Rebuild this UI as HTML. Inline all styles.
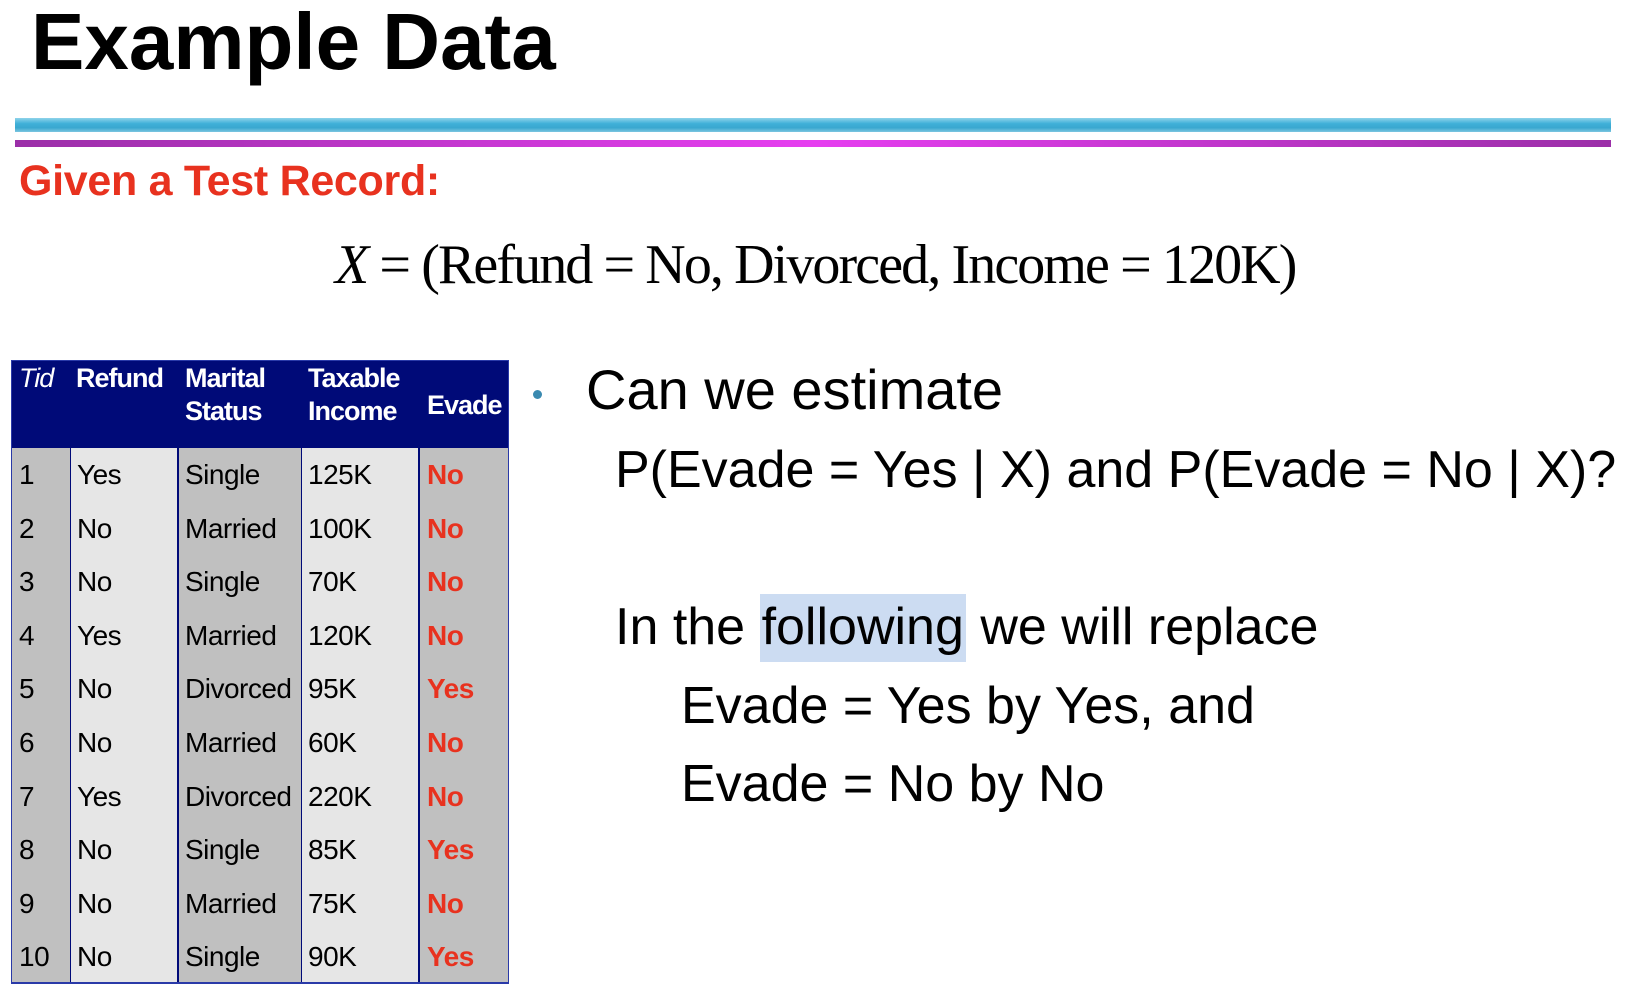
<!DOCTYPE html>
<html><head><meta charset="utf-8"><style>
body{margin:0;width:1628px;height:996px;background:#fff;position:relative;overflow:hidden;font-family:"Liberation Sans",sans-serif}
.a{position:absolute;white-space:nowrap}
.col{position:absolute;top:448px;height:536px}
.c{position:absolute;font-size:28px;color:#000;letter-spacing:-0.5px}
.h{position:absolute;font-size:27px;font-weight:bold;color:#fff;letter-spacing:-1px;line-height:33px}
.r{color:#e8321f;font-weight:bold}
.t{font-size:52px;color:#000}
.hl{background:#ccdcf2;padding:4px 2px 6px 2px}
</style></head><body>
<div class="a" style="left:31px;top:-4px;font-size:80px;font-weight:bold;letter-spacing:0px">Example Data</div>
<div class="a" style="left:15px;top:118px;width:1596px;height:14px;background:linear-gradient(#8fd3ea,#3fb0d8 40%,#3aa8d0 70%,#7cc6e0)"></div>
<div class="a" style="left:15px;top:140px;width:1596px;height:7px;background:linear-gradient(90deg,#9b2fa8,#e63ef0 50%,#9b2fa8)"></div>
<div class="a" style="left:19px;top:157px;font-size:43px;font-weight:bold;color:#e8321f;letter-spacing:-0.3px">Given a Test Record:</div>
<div class="a" style="left:335px;top:233px;font-family:'Liberation Serif',serif;font-size:56px;letter-spacing:-1.9px"><i>X</i> = (Refund = No, Divorced, Income = 120K)</div>

<div class="a" style="left:11px;top:360px;width:498px;height:624px;background:#000a78;border:1px solid #2a3aa8;box-sizing:border-box"></div>
<div class="col" style="left:12px;width:58px;background:#c0c0c0"></div>
<div class="col" style="left:71px;width:106px;background:#e6e6e6"></div>
<div class="col" style="left:179px;width:122px;background:#c0c0c0"></div>
<div class="col" style="left:302px;width:116px;background:#e6e6e6"></div>
<div class="col" style="left:420px;width:88px;background:#c0c0c0"></div>
<div class="a" style="left:11px;top:982px;width:498px;height:2px;background:#2a3aa8"></div>

<div class="h" style="left:19px;top:362px;font-weight:normal;font-style:italic">Tid</div>
<div class="h" style="left:76px;top:362px">Refund</div>
<div class="h" style="left:185px;top:362px">Marital<br>Status</div>
<div class="h" style="left:308px;top:362px">Taxable<br>Income</div>
<div class="h" style="left:427px;top:389px">Evade</div>

<div id="rows"></div>
<script>
var d=[["1","Yes","Single","125K","No"],["2","No","Married","100K","No"],["3","No","Single","70K","No"],["4","Yes","Married","120K","No"],["5","No","Divorced","95K","Yes"],["6","No","Married","60K","No"],["7","Yes","Divorced","220K","No"],["8","No","Single","85K","Yes"],["9","No","Married","75K","No"],["10","No","Single","90K","Yes"]];
var x=[19,77,185,308,427],h="";
d.forEach(function(r,i){var y=459+i*53.6;r.forEach(function(v,j){h+='<div class="c'+(j==4?' r':'')+'" style="left:'+x[j]+'px;top:'+y+'px">'+v+'</div>';});});
document.getElementById("rows").innerHTML=h;
</script>

<div class="a" style="left:533px;top:390px;width:9px;height:9px;border-radius:50%;background:#3a8ab0"></div>
<div class="a t" style="left:586px;top:357px;font-size:56px">Can we estimate</div>
<div class="a t" style="left:615px;top:440px">P(Evade = Yes | X) and P(Evade = No | X)?</div>
<div class="a t" style="left:615px;top:597px">In the <span class="hl">following</span> we will replace</div>
<div class="a t" style="left:681px;top:676px">Evade = Yes by Yes, and</div>
<div class="a t" style="left:681px;top:754px">Evade = No by No</div>
</body></html>
